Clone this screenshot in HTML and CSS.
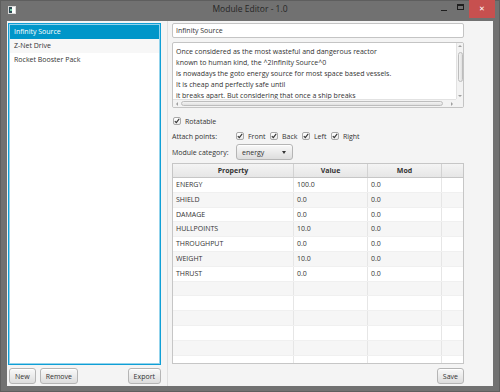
FILE: index.html
```html
<!DOCTYPE html>
<html>
<head>
<meta charset="utf-8">
<title>Module Editor - 1.0</title>
<link rel="stylesheet" href="styles.css">
</head>
<body>
<div class="window">
  <div class="titlebar">
    <div class="tb-left">
      <svg class="app-icon" width="8" height="8" viewBox="0 0 8 8">
        <rect x="0" y="0" width="8" height="8" fill="#d9d9d9"/>
        <rect x="1" y="1" width="3" height="6" fill="#2f4b55"/>
        <rect x="4" y="1" width="3" height="6" fill="#ffffff"/>
        <rect x="2" y="3" width="2" height="2" fill="#74c9a4"/>
      </svg>
    </div>
    <div class="title">Module Editor - 1.0</div>
    <div class="tb-right">
      <span class="tb-btn tb-min"><span class="min-ico"></span></span>
      <span class="tb-btn tb-max"><span class="max-ico"></span></span>
      <span class="tb-close">✕</span>
    </div>
  </div>
  <div class="content">
    <div class="left">
      <ul class="list">
        <li class="sel">Infinity Source</li>
        <li class="alt">Z-Net Drive</li>
        <li>Rocket Booster Pack</li>
      </ul>
      <div class="btnrow">
        <div class="btn">New</div>
        <div class="btn">Remove</div>
        <div class="spacer"></div>
        <div class="btn">Export</div>
      </div>
    </div>
    <div class="divider"></div>
    <div class="right">
      <div class="field">Infinity Source</div>
      <div class="textarea">
        <div class="ta-text">Once considered as the most wasteful and dangerous reactor
known to human kind, the ^2Infinity Source^0
is nowadays the goto energy source for most space based vessels.
It is cheap and perfectly safe until
it breaks apart. But considering that once a ship breaks
apart the last worry of the crew is the reactor</div>
        <div class="vbar">
          <span class="arr arr-up"></span>
          <span class="vthumb"></span>
          <span class="spacer"></span>
          <span class="arr arr-down"></span>
        </div>
        <div class="hbar">
          <span class="arr arr-left"></span>
          <span class="hthumb"></span>
          <span class="spacer"></span>
          <span class="arr arr-right"></span>
        </div>
        <div class="corner"></div>
      </div>

      <div class="row row-rot">
        <div class="cb"><span class="box"><svg width="6" height="6" viewBox="0 0 6 6"><path d="M0.8 3.1 L2.3 4.7 L5.2 0.9" fill="none" stroke="#333" stroke-width="1.1"/></svg></span>Rotatable</div>
      </div>

      <div class="row row-attach">
        <div class="lbl">Attach points:</div>
        <div class="checks">
          <div class="cb"><span class="box"><svg width="6" height="6" viewBox="0 0 6 6"><path d="M0.8 3.1 L2.3 4.7 L5.2 0.9" fill="none" stroke="#333" stroke-width="1.1"/></svg></span>Front</div>
          <div class="cb"><span class="box"><svg width="6" height="6" viewBox="0 0 6 6"><path d="M0.8 3.1 L2.3 4.7 L5.2 0.9" fill="none" stroke="#333" stroke-width="1.1"/></svg></span>Back</div>
          <div class="cb"><span class="box"><svg width="6" height="6" viewBox="0 0 6 6"><path d="M0.8 3.1 L2.3 4.7 L5.2 0.9" fill="none" stroke="#333" stroke-width="1.1"/></svg></span>Left</div>
          <div class="cb"><span class="box"><svg width="6" height="6" viewBox="0 0 6 6"><path d="M0.8 3.1 L2.3 4.7 L5.2 0.9" fill="none" stroke="#333" stroke-width="1.1"/></svg></span>Right</div>
        </div>
      </div>

      <div class="row row-cat">
        <div class="lbl">Module category:</div>
        <div class="combo"><span>energy</span><span class="combo-arrow"></span></div>
      </div>

      <div class="table">
        <div class="thead">
          <div class="th">Property</div>
          <div class="th">Value</div>
          <div class="th">Mod</div>
          <div class="th th-fill"></div>
        </div>
        <div class="tbody">
          <div class="tr"><div class="td">ENERGY</div><div class="td">100.0</div><div class="td">0.0</div><div class="td td-fill"></div></div>
          <div class="tr"><div class="td">SHIELD</div><div class="td">0.0</div><div class="td">0.0</div><div class="td td-fill"></div></div>
          <div class="tr"><div class="td">DAMAGE</div><div class="td">0.0</div><div class="td">0.0</div><div class="td td-fill"></div></div>
          <div class="tr"><div class="td">HULLPOINTS</div><div class="td">10.0</div><div class="td">0.0</div><div class="td td-fill"></div></div>
          <div class="tr"><div class="td">THROUGHPUT</div><div class="td">0.0</div><div class="td">0.0</div><div class="td td-fill"></div></div>
          <div class="tr"><div class="td">WEIGHT</div><div class="td">10.0</div><div class="td">0.0</div><div class="td td-fill"></div></div>
          <div class="tr"><div class="td">THRUST</div><div class="td">0.0</div><div class="td">0.0</div><div class="td td-fill"></div></div>
          <div class="tr"><div class="td"></div><div class="td"></div><div class="td"></div><div class="td td-fill"></div></div>
          <div class="tr"><div class="td"></div><div class="td"></div><div class="td"></div><div class="td td-fill"></div></div>
          <div class="tr"><div class="td"></div><div class="td"></div><div class="td"></div><div class="td td-fill"></div></div>
          <div class="tr"><div class="td"></div><div class="td"></div><div class="td"></div><div class="td td-fill"></div></div>
          <div class="tr"><div class="td"></div><div class="td"></div><div class="td"></div><div class="td td-fill"></div></div>
          <div class="tr"><div class="td"></div><div class="td"></div><div class="td"></div><div class="td td-fill"></div></div>
          <div class="tr"><div class="td"></div><div class="td"></div><div class="td"></div><div class="td td-fill"></div></div>
        </div>
      </div>

      <div class="save-row">
        <div class="btn">Save</div>
      </div>
    </div>
  </div>
</div>
</body>
</html>
```
FILE: styles.css
```css
* { box-sizing: border-box; margin: 0; padding: 0; }
html, body { width: 500px; height: 392px; overflow: hidden; }
body {
  font-family: "Open Sans", "Noto Sans", sans-serif;
  font-size: 7px;
  color: #333;
}
.window {
  width: 500px;
  height: 392px;
  background: #717171;
  display: flex;
  flex-direction: column;
  box-shadow: inset 0 0 0 1px #5e5e5e;
}
.titlebar {
  height: 21px;
  display: grid;
  grid-template-columns: 1fr auto 1fr;
}
.tb-left { padding: 6px 0 0 8px; }
.app-icon { display: block; }
.title {
  font-size: 8.5px;
  color: #262626;
  line-height: 18px;
}
.tb-right {
  display: flex;
  justify-content: flex-end;
  align-items: flex-start;
  padding-right: 5px;
}
.tb-btn {
  height: 18px;
  display: flex;
  align-items: center;
  justify-content: center;
}
.tb-min { width: 16px; }
.tb-max { width: 17px; }
.min-ico { width: 6px; height: 1px; background: #1e1e1e; margin-top: 3px; }
.max-ico { width: 7px; height: 6px; border: 1px solid #1e1e1e; border-top-width: 2px; margin-top: -4px; }
.tb-close {
  width: 26px;
  height: 18px;
  background: #c7504f;
  color: #fff;
  font-size: 7px;
  font-family: "DejaVu Sans", sans-serif;
  display: flex;
  align-items: center;
  justify-content: center;
}

.content {
  flex: 1;
  margin: 0 7px 6px 7px;
  background: #f4f4f4;
  display: flex;
}
.left {
  width: 156px;
  padding: 2px 2px 2px 1px;
  display: flex;
  flex-direction: column;
}
.list {
  height: 342px;
  list-style: none;
  background: #fff;
  border: 1px solid #0f9fd6;
  box-shadow: inset 0 0 0 1px #93d3ec;
  padding: 1px;
}
.list li {
  height: 14px;
  line-height: 14px;
  padding-left: 4px;
}
.list li.sel { background: #0096c9; color: #fff; }
.list li.alt { background: #f7f7f7; }

.btnrow {
  margin-top: 3px;
  display: flex;
  gap: 4px;
  height: 16px;
  padding-left: 1px;
}
.spacer { flex: 1; }
.btn {
  height: 16px;
  padding: 0 5px;
  border: 1px solid #b5b5b5;
  border-radius: 3px;
  background: linear-gradient(#f9f9f9, #dddddd);
  box-shadow: inset 0 1px 0 #ffffff;
  display: flex;
  align-items: center;
  justify-content: center;
  color: #333;
}

.divider {
  width: 5px;
  border-right: 1px solid #e0e0e0;
}
.right {
  flex: 1;
  padding: 2px 0 2px 4px;
  display: flex;
  flex-direction: column;
}
.field {
  width: 292px;
  height: 15px;
  background: #fff;
  border: 1px solid #c4c4c4;
  border-radius: 2px;
  padding-left: 3px;
  line-height: 13px;
}
.textarea {
  margin-top: 4px;
  width: 292px;
  height: 66px;
  border: 1px solid #c4c4c4;
  border-radius: 2px;
  background: #fff;
  display: grid;
  grid-template-columns: 1fr 7px;
  grid-template-rows: 1fr 8px;
  overflow: hidden;
}
.ta-text {
  padding: 3px 0 0 3px;
  line-height: 11px;
  white-space: pre;
  overflow: hidden;
}
.vbar {
  display: flex;
  flex-direction: column;
  align-items: center;
  background: #f3f3f3;
  border-left: 1px solid #e2e2e2;
}
.hbar {
  display: flex;
  align-items: center;
  background: #f3f3f3;
  border-top: 1px solid #e2e2e2;
}
.corner { background: #f3f3f3; }
.arr { width: 0; height: 0; display: block; }
.arr-up { border-left: 2px solid transparent; border-right: 2px solid transparent; border-bottom: 2px solid #a0a0a0; margin-top: 2px; }
.arr-down { border-left: 2px solid transparent; border-right: 2px solid transparent; border-top: 2px solid #a0a0a0; margin-bottom: 2px; }
.arr-left { border-top: 2px solid transparent; border-bottom: 2px solid transparent; border-right: 2px solid #a0a0a0; margin-left: 3px; }
.arr-right { border-top: 2px solid transparent; border-bottom: 2px solid transparent; border-left: 2px solid #a0a0a0; margin-right: 3px; }
.vthumb {
  width: 5px;
  height: 30px;
  margin-top: 5px;
  border: 1px solid #bdbdbd;
  border-radius: 3px;
  background: linear-gradient(90deg, #f4f4f4, #e0e0e0);
}
.hthumb {
  height: 5px;
  width: 262px;
  margin-left: 3px;
  border: 1px solid #bdbdbd;
  border-radius: 3px;
  background: linear-gradient(#f4f4f4, #e0e0e0);
}

.row { display: flex; align-items: center; }
.row-rot { margin-top: 7px; height: 12px; padding-left: 1px; }
.row-attach { margin-top: 3px; height: 12px; }
.row-cat { margin-top: 2px; height: 16px; }
.lbl { width: 64px; }
.checks { display: flex; gap: 4.5px; }
.cb { display: flex; align-items: center; gap: 4px; }
.box {
  width: 8px;
  height: 8px;
  border: 1px solid #a8a8a8;
  border-radius: 2px;
  background: linear-gradient(#ffffff, #ebebeb);
  display: flex;
  align-items: center;
  justify-content: center;
}
.box svg { display: block; }
.combo {
  width: 57px;
  height: 16px;
  border: 1px solid #b5b5b5;
  border-radius: 3px;
  background: linear-gradient(#f9f9f9, #dddddd);
  box-shadow: inset 0 1px 0 #ffffff;
  display: flex;
  align-items: center;
  padding-left: 5px;
}
.combo-arrow {
  margin-left: auto;
  margin-right: 6px;
  width: 0;
  height: 0;
  border-left: 2.5px solid transparent;
  border-right: 2.5px solid transparent;
  border-top: 3px solid #333;
}

.table {
  margin-top: 3px;
  width: 292px;
  height: 201px;
  border: 1px solid #c6c6c6;
  background: #fff;
  overflow: hidden;
}
.thead {
  display: grid;
  grid-template-columns: 121px 74px 74px 1fr;
  height: 14px;
  background: linear-gradient(#f4f4f4, #e6e6e6);
  border-bottom: 1px solid #c6c6c6;
}
.th {
  border-right: 1px solid #d2d2d2;
  font-weight: bold;
  text-align: center;
  line-height: 13px;
}
.th-fill { border-right: none; }
.tr {
  display: grid;
  grid-template-columns: 121px 74px 74px 1fr;
  height: 14.8px;
  border-bottom: 1px solid #f0f0f0;
}
.tr:nth-child(even) { background: #f6f6f6; }
.td {
  border-right: 1px solid #e6e6e6;
  padding-left: 3px;
  line-height: 13.8px;
  white-space: nowrap;
}
.td-fill { border-right: none; }

.save-row {
  margin-top: 4px;
  width: 292px;
  display: flex;
  justify-content: flex-end;
}
```
